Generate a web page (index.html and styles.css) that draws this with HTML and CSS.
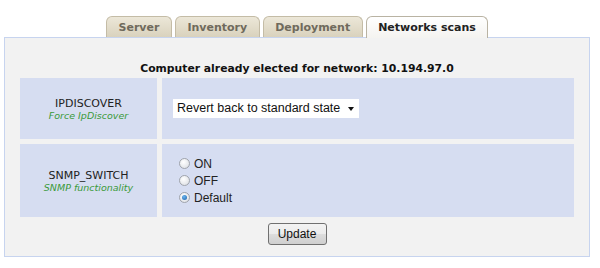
FILE: index.html
```html
<!DOCTYPE html>
<html lang="en">
<head>
  <meta charset="UTF-8">
  <title>Networks scans</title>
  <link rel="stylesheet" href="styles.css">
</head>
<body>
  <!-- Tab strip -->
  <div class="tabs">
    <div class="tab">Server</div>
    <div class="tab">Inventory</div>
    <div class="tab">Deployment</div>
    <div class="tab active">Networks scans</div>
  </div>

  <!-- Panel for the active tab -->
  <div class="panel">
    <div class="panel-title">Computer already elected for network: 10.194.97.0</div>

    <div class="opt-row row-ipd">
      <div class="opt-name">
        IPDISCOVER
        <span class="opt-desc">Force IpDiscover</span>
      </div>
      <div class="opt-value">
        <div class="fake-select">Revert back to standard state <span class="arrow"></span></div>
      </div>
    </div>

    <div class="opt-row row-snmp">
      <div class="opt-name">
        SNMP_SWITCH
        <span class="opt-desc">SNMP functionality</span>
      </div>
      <div class="opt-value radios">
        <label class="radio"><span class="dot"></span>ON</label>
        <label class="radio"><span class="dot"></span>OFF</label>
        <label class="radio"><span class="dot checked"></span>Default</label>
      </div>
    </div>

    <div class="actions">
      <button class="btn">Update</button>
    </div>
  </div>
</body>
</html>
```

FILE: styles.css
```css
/* page */
body {
  margin: 0;
  background: #ffffff;
  font-family: "DejaVu Sans", Verdana, sans-serif;
  color: #222;
}

/* tabs */
.tabs {
  display: flex;
  gap: 3px;
  padding-left: 106px;
  margin-top: 16px;
  height: 21px;
}
.tab {
  height: 20px;
  padding: 0 11.5px;
  line-height: 22px;
  font-size: 11px;
  font-weight: bold;
  color: #6f6a5c;
  background: linear-gradient(#ece7d8, #d9d2bd);
  border: 1px solid #c4bca6;
  border-bottom: none;
  border-radius: 6px 6px 0 0;
}
.tab.active {
  color: #222;
  background: linear-gradient(#ffffff, #f4f3f0);
  border-color: #b9b3a3;
  height: 21px;
}

/* panel */
.panel {
  margin: 0 10px 0 4px;
  border: 1px solid #c7d4ef;
  background: #f2f2f2;
  padding: 24px 15px 11px 15px;
}
.panel-title {
  text-align: center;
  font-size: 10.8px;
  font-weight: bold;
  color: #111;
  margin-bottom: 3px;
}

/* option rows */
.opt-row {
  display: flex;
  gap: 5px;
  margin-bottom: 5px;
}
.row-ipd { height: 61px; }
.row-snmp { height: 73px; }
.opt-name {
  width: 137px;
  background: #d6ddf1;
  display: flex;
  flex-direction: column;
  align-items: center;
  justify-content: center;
  font-size: 11px;
  color: #222;
}
.opt-desc {
  font-size: 9.5px;
  font-style: italic;
  color: #3a9a3a;
}
.opt-value {
  flex: 1;
  background: #d6ddf1;
  display: flex;
  align-items: center;
  padding-left: 11px;
}

/* select look-alike */
.fake-select {
  background: #fff;
  height: 19px;
  line-height: 19px;
  padding: 0 5px 0 4px;
  font-family: "Liberation Sans", Arial, sans-serif;
  font-size: 12.5px;
  color: #111;
  display: flex;
  align-items: center;
  gap: 8px;
}
.arrow {
  width: 0;
  height: 0;
  border-left: 3.5px solid transparent;
  border-right: 3.5px solid transparent;
  border-top: 4px solid #111;
}

/* radios */
.radios {
  flex-direction: column;
  align-items: flex-start;
  justify-content: center;
  padding-left: 17px;
  gap: 4px;
}
.radio {
  display: flex;
  align-items: center;
  gap: 4px;
  font-family: "Liberation Sans", Arial, sans-serif;
  font-size: 12px;
  height: 13px;
}
.dot {
  width: 11px;
  height: 11px;
  border-radius: 50%;
  border: 1px solid #a0a4ac;
  background: radial-gradient(circle at 40% 35%, #ffffff, #d8dbe0);
  box-sizing: border-box;
  display: flex;
  align-items: center;
  justify-content: center;
}
.dot.checked::after {
  content: "";
  width: 5px;
  height: 5px;
  border-radius: 50%;
  background: radial-gradient(circle at 40% 35%, #6ab6f0, #1c5fa8);
}

/* button */
.actions {
  display: flex;
  justify-content: center;
  padding-top: 1px;
}
.btn {
  font-family: "Liberation Sans", Arial, sans-serif;
  font-size: 12px;
  color: #111;
  width: 59px;
  height: 22px;
  padding: 0;
  border: 1px solid #707070;
  border-radius: 3px;
  background: linear-gradient(#f3f3f3 0%, #ebebeb 50%, #dddddd 51%, #cfcfcf 100%);
}
```
